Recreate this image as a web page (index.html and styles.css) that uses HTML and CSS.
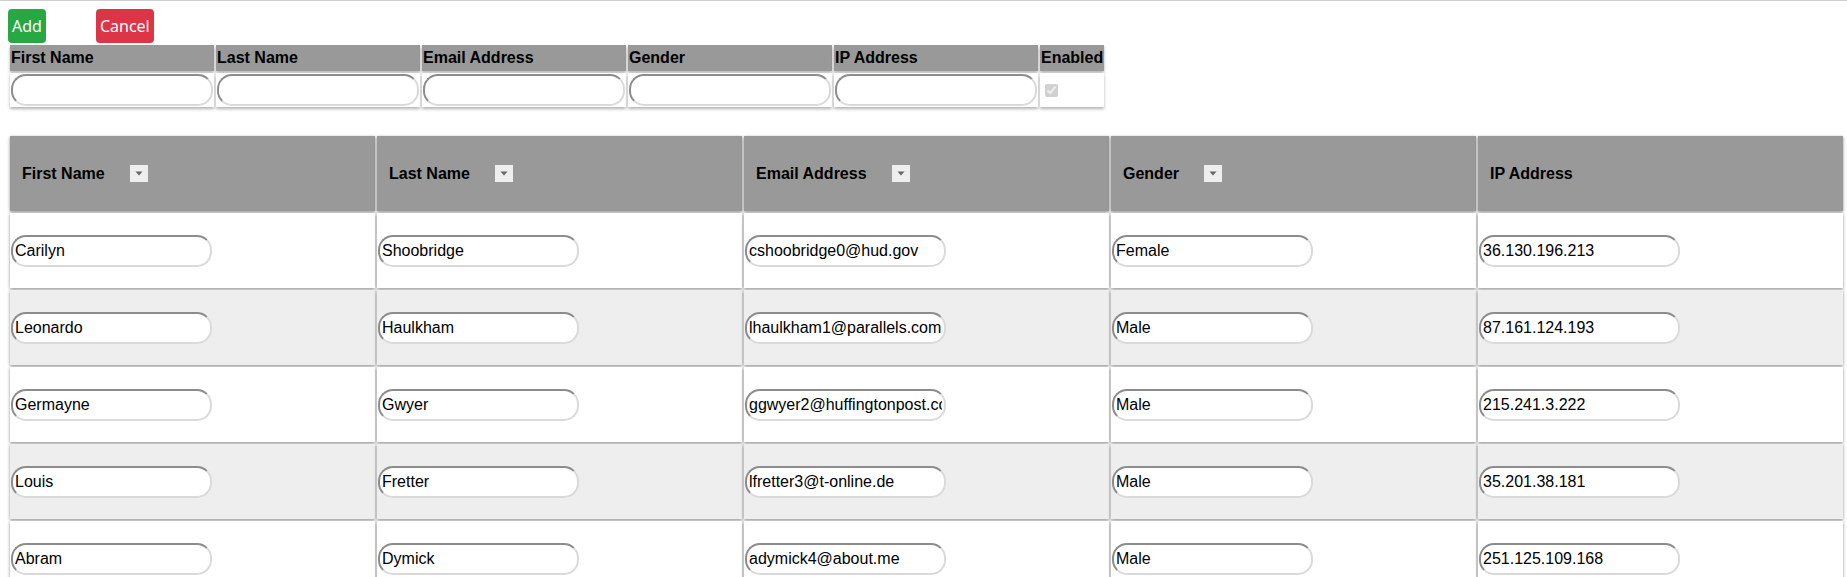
FILE: index.html
```html
<!DOCTYPE html>
<html>
<head>
<meta charset="utf-8">
<title>Editable table</title>
<link rel="stylesheet" href="styles.css">
</head>
<body>
<div class="topline"></div>
<div class="page">
  <div class="actions">
    <button class="btn btn-add">Add</button>
    <button class="btn btn-cancel">Cancel</button>
  </div>
  <table class="form">
    <tr>
      <th>First Name</th><th>Last Name</th><th>Email Address</th><th>Gender</th><th>IP Address</th><th>Enabled</th>
    </tr>
    <tr>
      <td><input class="field" type="text"></td>
      <td><input class="field" type="text"></td>
      <td><input class="field" type="text"></td>
      <td><input class="field" type="text"></td>
      <td><input class="field" type="text"></td>
      <td><input class="check" type="checkbox" checked disabled></td>
    </tr>
  </table>
  <table class="grid">
    <thead>
      <tr>
        <th><div class="hcell"><span>First Name</span><span class="dd"><svg width="8" height="5" viewBox="0 0 8 5"><path d="M0.5 0.5 L7.5 0.5 L4 4.5 Z" fill="#666"/></svg></span></div></th>
        <th><div class="hcell"><span>Last Name</span><span class="dd"><svg width="8" height="5" viewBox="0 0 8 5"><path d="M0.5 0.5 L7.5 0.5 L4 4.5 Z" fill="#666"/></svg></span></div></th>
        <th><div class="hcell"><span>Email Address</span><span class="dd"><svg width="8" height="5" viewBox="0 0 8 5"><path d="M0.5 0.5 L7.5 0.5 L4 4.5 Z" fill="#666"/></svg></span></div></th>
        <th><div class="hcell"><span>Gender</span><span class="dd"><svg width="8" height="5" viewBox="0 0 8 5"><path d="M0.5 0.5 L7.5 0.5 L4 4.5 Z" fill="#666"/></svg></span></div></th>
        <th><div class="hcell"><span>IP Address</span></div></th>
      </tr>
    </thead>
    <tbody>
      <tr>
        <td><input class="field" type="text" value="Carilyn"></td>
        <td><input class="field" type="text" value="Shoobridge"></td>
        <td><input class="field" type="text" value="cshoobridge0@hud.gov"></td>
        <td><input class="field" type="text" value="Female"></td>
        <td><input class="field" type="text" value="36.130.196.213"></td>
      </tr>
      <tr>
        <td><input class="field" type="text" value="Leonardo"></td>
        <td><input class="field" type="text" value="Haulkham"></td>
        <td><input class="field" type="text" value="lhaulkham1@parallels.com"></td>
        <td><input class="field" type="text" value="Male"></td>
        <td><input class="field" type="text" value="87.161.124.193"></td>
      </tr>
      <tr>
        <td><input class="field" type="text" value="Germayne"></td>
        <td><input class="field" type="text" value="Gwyer"></td>
        <td><input class="field" type="text" value="ggwyer2@huffingtonpost.com"></td>
        <td><input class="field" type="text" value="Male"></td>
        <td><input class="field" type="text" value="215.241.3.222"></td>
      </tr>
      <tr>
        <td><input class="field" type="text" value="Louis"></td>
        <td><input class="field" type="text" value="Fretter"></td>
        <td><input class="field" type="text" value="lfretter3@t-online.de"></td>
        <td><input class="field" type="text" value="Male"></td>
        <td><input class="field" type="text" value="35.201.38.181"></td>
      </tr>
      <tr>
        <td><input class="field" type="text" value="Abram"></td>
        <td><input class="field" type="text" value="Dymick"></td>
        <td><input class="field" type="text" value="adymick4@about.me"></td>
        <td><input class="field" type="text" value="Male"></td>
        <td><input class="field" type="text" value="251.125.109.168"></td>
      </tr>
    </tbody>
  </table>
</div>
</body>
</html>
```

FILE: styles.css
```css
html, body {
  overflow: hidden;
}
body {
  margin: 0;
  background: #fff;
  font-family: "Liberation Sans", Arial, sans-serif;
  font-size: 16px;
  color: #000;
}
.topline {
  border-top: 1px solid #cfcfcf;
}
.page {
  padding: 8px 0 0 8px;
}
.actions {
  display: flex;
  gap: 50px;
}
.btn {
  height: 34px;
  padding: 0 4px;
  border: none;
  border-radius: 4px;
  color: #fff;
  font-family: "Noto Sans", "Open Sans", sans-serif;
  font-size: 16px;
  line-height: 34px;
  cursor: pointer;
}
.btn-add {
  background: #28a745;
}
.btn-cancel {
  background: #dc3545;
}

.field {
  box-sizing: border-box;
  width: 201px;
  height: 32px;
  margin: 0;
  padding: 0 2px 0 2px;
  border: 2px solid;
  border-color: #8c8c8c #dadada #dadada #8c8c8c;
  border-radius: 15px;
  background: #fff;
  font-family: "Liberation Sans", Arial, sans-serif;
  font-size: 16px;
  color: #000;
  display: block;
}

/* top form table */
.form {
  border-spacing: 2px;
}
.form th,
.form td {
  padding: 1px;
  box-shadow: 0 2px 3px rgba(0, 0, 0, 0.3);
}
.form th {
  background: #999;
  height: 24px;
  text-align: left;
  font-weight: bold;
  white-space: nowrap;
}
.form td {
  background: #fff;
  vertical-align: middle;
}
.form .field {
  width: 202px;
}
.check {
  margin: 3px 3px 3px 4px;
  vertical-align: middle;
}

/* data grid */
.grid {
  margin-top: 25px;
  width: 1837px;
  border-spacing: 2px;
  table-layout: fixed;
}
.grid th,
.grid td {
  box-shadow: 0 1px 3px rgba(0, 0, 0, 0.45);
}
.grid th {
  background: #999;
  height: 75px;
  padding: 0;
  text-align: left;
  font-weight: bold;
}
.hcell {
  display: flex;
  align-items: center;
  padding-left: 12px;
}
.dd {
  margin-left: 25px;
  width: 18px;
  height: 17px;
  background: #eee;
  display: flex;
  align-items: center;
  justify-content: center;
}
.grid td {
  height: 73px;
  padding: 1px;
  vertical-align: middle;
  background: #fff;
}
.grid tbody tr:nth-child(even) td {
  background: #eee;
}
```
